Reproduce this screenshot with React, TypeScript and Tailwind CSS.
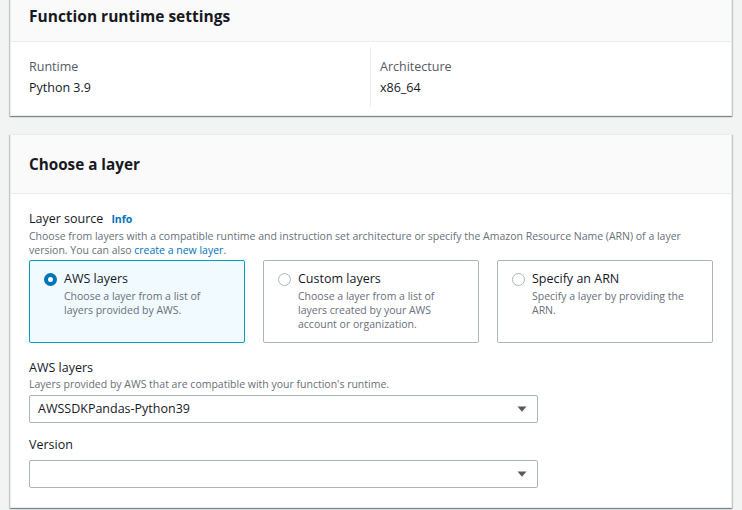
import { useState } from 'react'

const panel =
  'bg-white border border-[#eaeded] shadow-[0_1px_1px_0_rgba(0,28,36,0.3),1px_1px_1px_0_rgba(0,28,36,0.15),-1px_1px_1px_0_rgba(0,28,36,0.15)]'

type Fuente = 'aws' | 'custom' | 'arn'

const FUENTES: { value: Fuente; label: string; desc: string }[] = [
  { value: 'aws', label: 'AWS layers', desc: 'Choose a layer from a list of layers provided by AWS.' },
  { value: 'custom', label: 'Custom layers', desc: 'Choose a layer from a list of layers created by your AWS account or organization.' },
  { value: 'arn', label: 'Specify an ARN', desc: 'Specify a layer by providing the ARN.' },
]

function Caret() {
  return (
    <svg width="10" height="6" viewBox="0 0 10 6" className="flex-shrink-0">
      <path d="M0.5 0.5h9L5 5.8z" fill="#545b64" />
    </svg>
  )
}

function Select({ value }: { value: string }) {
  return (
    <div className="w-[509px] h-[28px] border border-[#aab7b8] rounded-[2px] bg-white flex items-center pl-[8px] pr-[10px]">
      <span className="flex-1 text-[12.5px] text-[#16191f]">{value}</span>
      <Caret />
    </div>
  )
}

function Radio({ checked }: { checked: boolean }) {
  return checked ? (
    <span className="w-[13px] h-[13px] rounded-full border-[4px] border-[#0073bb] bg-white flex-shrink-0 mt-[3.5px]" />
  ) : (
    <span className="w-[13px] h-[13px] rounded-full border border-[#aab7b8] bg-white flex-shrink-0 mt-[3.5px]" />
  )
}

export default function App() {
  const [fuente, setFuente] = useState<Fuente>('aws')

  return (
    <div
      className="h-[510px] overflow-hidden bg-[#f2f3f3] px-[10px] text-[#16191f]"
      style={{ fontFamily: '"Open Sans", "Liberation Sans", sans-serif' }}
    >
      {/* Runtime */}
      <div className={`${panel} mt-[-13px]`}>
        <div className="bg-[#fafafa] border-b border-[#eaeded] px-[18px] pt-[16px] pb-[13px]">
          <h2 className="text-[15.5px] leading-[24px] font-bold">Function runtime settings</h2>
        </div>
        <div className="px-[18px] pt-[5px] pb-[8px] flex">
          <div className="w-[341px] pt-[10px] pb-[9px]">
            <p className="text-[12.5px] leading-[20px] text-[#545b64]">Runtime</p>
            <p className="text-[12.5px] leading-[20px] mt-[1px]">Python 3.9</p>
          </div>
          <div className="flex-1 border-l border-[#eaeded] pl-[9px] pt-[10px] pb-[9px]">
            <p className="text-[12.5px] leading-[20px] text-[#545b64]">Architecture</p>
            <p className="text-[12.5px] leading-[20px] mt-[1px]">x86_64</p>
          </div>
        </div>
      </div>

      {/* Layer */}
      <div className={`${panel} mt-[18px]`}>
        <div className="bg-[#fafafa] border-b border-[#eaeded] px-[18px] py-[17px]">
          <h2 className="text-[15.25px] leading-[24px] font-bold">Choose a layer</h2>
        </div>
        <div className="px-[18px] pt-[15px] pb-[19px]">
          <p className="text-[12.5px] leading-[20px]">
            Layer source
            <span className="ml-[8px] text-[10.5px] font-bold text-[#0073bb]">Info</span>
          </p>
          <p className="text-[10.5px] leading-[14px] text-[#687078]">
            Choose from layers with a compatible runtime and instruction set architecture or specify the Amazon Resource Name (ARN) of a layer version. You can also <span className="text-[#0073bb]">create a new layer</span>.
          </p>

          <div className="grid grid-cols-3 gap-[18px] mt-[3px]">
            {FUENTES.map(f => {
              const sel = fuente === f.value
              return (
                <button
                  key={f.value}
                  onClick={() => setFuente(f.value)}
                  className={`h-[83px] text-left flex items-start gap-[7px] pl-[14px] pr-[14px] pt-[8px] border rounded-[2px] ${
                    sel ? 'border-[#00a1c9] bg-[#f1faff]' : 'border-[#aab7b8] bg-white'
                  }`}
                >
                  <Radio checked={sel} />
                  <div>
                    <p className="text-[12.5px] leading-[20px]">{f.label}</p>
                    <p className="text-[10.5px] leading-[14px] text-[#687078]">{f.desc}</p>
                  </div>
                </button>
              )
            })}
          </div>

          <p className="text-[12.5px] leading-[20px] mt-[15px]">AWS layers</p>
          <p className="text-[10.5px] leading-[13px] text-[#687078]">
            Layers provided by AWS that are compatible with your function's runtime.
          </p>
          <div className="mt-[4px]">
            <Select value="AWSSDKPandas-Python39" />
          </div>

          <p className="text-[12.5px] leading-[20px] mt-[12px]">Version</p>
          <div className="mt-[5px]">
            <Select value="" />
          </div>
        </div>
      </div>
    </div>
  )
}
